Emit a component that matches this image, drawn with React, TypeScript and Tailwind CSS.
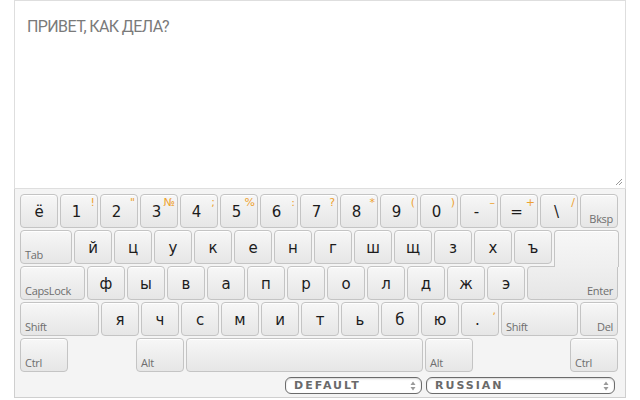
import React from "react";

type KeyProps = {
  w?: number;
  main?: string;
  alt?: string;
  label?: string;
  right?: boolean;
};

const keyBase =
  "relative shrink-0 h-[34px] rounded-[4px] border border-[#c4c4c4] bg-gradient-to-b from-[#f7f7f7] to-[#e6e6e6] shadow-[inset_0_1px_0_#ffffff]";

function Key({ w = 38, main, alt, label, right }: KeyProps) {
  return (
    <div className={`${keyBase} flex items-center justify-center`} style={{ width: w }}>
      {main && (
        <span
          className={`pt-[3px] text-[15px] leading-none text-[#1c1c1c] font-['DejaVu_Sans',sans-serif] ${
            alt ? "mr-[5px]" : ""
          }`}
        >
          {main}
        </span>
      )}
      {alt && (
        <span className="absolute top-[2px] right-[2px] text-[11px] leading-none text-[#eda12f] font-['DejaVu_Sans',sans-serif]">
          {alt}
        </span>
      )}
      {label && (
        <span
          className={`absolute bottom-[3px] text-[11px] leading-none tracking-[-0.3px] text-[#6e6e6e] font-['Open_Sans',sans-serif] ${
            right ? "right-[4px]" : "left-[4px]"
          }`}
        >
          {label}
        </span>
      )}
    </div>
  );
}

function Arrows() {
  return (
    <svg width="6" height="10" viewBox="0 0 6 10" className="shrink-0">
      <path d="M3 0.5 L5.5 4 H0.5 Z" fill="#9a9a9a" />
      <path d="M3 9.5 L5.5 6 H0.5 Z" fill="#9a9a9a" />
    </svg>
  );
}

function Select({ w, value }: { w: number; value: string }) {
  return (
    <div
      className="flex h-[17px] items-center justify-between rounded-[6px] border border-[#6b6b6b] bg-white pl-[8px] pr-[5px] shadow-[inset_0_1px_2px_#d6d6d6]"
      style={{ width: w }}
    >
      <span className="text-[11px] font-bold leading-none tracking-[2px] text-[#6a6a6a] font-['DejaVu_Sans',sans-serif]">
        {value}
      </span>
      <Arrows />
    </div>
  );
}

const row1: [string, string?][] = [
  ["ё"],
  ["1", "!"],
  ["2", '"'],
  ["3", "№"],
  ["4", ";"],
  ["5", "%"],
  ["6", ":"],
  ["7", "?"],
  ["8", "*"],
  ["9", "("],
  ["0", ")"],
  ["-", "–"],
  ["=", "+"],
  ["\\", "/"],
];

const row2 = ["й", "ц", "у", "к", "е", "н", "г", "ш", "щ", "з", "х", "ъ"];
const row3 = ["ф", "ы", "в", "а", "п", "р", "о", "л", "д", "ж", "э"];
const row4 = ["я", "ч", "с", "м", "и", "т", "ь", "б", "ю"];

export default function App() {
  return (
    <div className="h-[400px] w-[640px] overflow-hidden bg-white">
      <div className="ml-[14px] w-[612px]">
        <div className="relative h-[189px] border border-[#dedede] bg-white px-[12px] pt-[16px]">
          <p className="text-[16px] leading-[20px] tracking-[-0.6px] text-[#7a7a7a] font-['Roboto',sans-serif]">
            ПРИВЕТ, КАК ДЕЛА?
          </p>
          <svg
            width="8"
            height="8"
            viewBox="0 0 8 8"
            className="absolute bottom-[2px] right-[2px]"
          >
            <path d="M1 7 L7 1 M4 7 L7 4" stroke="#9a9a9a" strokeWidth="1" />
          </svg>
        </div>

        <div className="flex flex-col gap-[2px] border border-t-0 border-[#cfcfcf] bg-[#f4f4f4] pb-[3px] pl-[5px] pt-[5px]">
          <div className="flex h-[34px] gap-[2px]">
            {row1.map(([m, a]) => (
              <Key key={m} main={m} alt={a} />
            ))}
            <Key label="Bksp" right />
          </div>

          <div className="flex h-[34px] items-start gap-[2px]">
            <Key w={52} label="Tab" />
            {row2.map((m) => (
              <Key key={m} main={m} />
            ))}
            <div className="relative z-10 h-[37px] w-[65px] shrink-0 rounded-t-[4px] border border-b-0 border-[#c4c4c4] bg-gradient-to-b from-[#f7f7f7] to-[#efefef] shadow-[inset_0_1px_0_#ffffff]" />
          </div>

          <div className="flex h-[34px] gap-[2px]">
            <Key w={65} label="CapsLock" />
            {row3.map((m) => (
              <Key key={m} main={m} />
            ))}
            <div className="relative h-[34px] w-[91px] shrink-0 rounded-[4px] rounded-tr-none border border-[#c4c4c4] bg-gradient-to-b from-[#efefef] to-[#e6e6e6]">
              <span className="absolute bottom-[3px] right-[4px] text-[11px] leading-none tracking-[-0.3px] text-[#6e6e6e] font-['Open_Sans',sans-serif]">
                Enter
              </span>
            </div>
          </div>

          <div className="flex h-[34px] gap-[2px]">
            <Key w={79} label="Shift" />
            {row4.map((m) => (
              <Key key={m} main={m} />
            ))}
            <Key main="." alt="," />
            <Key w={77} label="Shift" />
            <Key label="Del" right />
          </div>

          <div className="flex h-[34px] gap-[2px]">
            <Key w={48} label="Ctrl" />
            <div className="w-[64px] shrink-0" />
            <Key w={48} label="Alt" />
            <Key w={237} />
            <Key w={48} label="Alt" />
            <div className="w-[93px] shrink-0" />
            <Key w={48} label="Ctrl" />
          </div>

          <div className="mt-[3px] flex justify-end gap-[4px] pr-[10px]">
            <Select w={137} value="DEFAULT" />
            <Select w={189} value="RUSSIAN" />
          </div>
        </div>
      </div>
    </div>
  );
}
